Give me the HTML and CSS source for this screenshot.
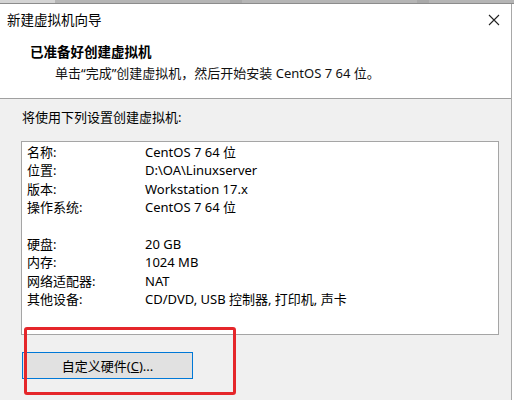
FILE: index.html
```html
<!DOCTYPE html>
<html lang="zh-CN">
<head>
<meta charset="utf-8">
<link rel="stylesheet" href="styles.css">
</head>
<body>
<div class="screen">
  <div class="topstrip">
    <span class="seg seg-a"></span>
    <span class="seg seg-b"></span>
    <span class="seg seg-c"></span>
    <span class="seg seg-d"></span>
  </div>
  <div class="window">
    <div class="titlebar">
      <span class="title">新建虚拟机向导</span>
      <svg class="close" width="12" height="12" viewBox="0 0 12 12"><path d="M1 1 L11 11 M11 1 L1 11" stroke="#222" stroke-width="1.1" fill="none"/></svg>
    </div>
    <div class="header">
      <div class="h-title">已准备好创建虚拟机</div>
      <div class="h-sub">单击“完成”创建虚拟机，然后开始安装 CentOS 7 64 位。</div>
    </div>
    <div class="content">
      <div class="intro">将使用下列设置创建虚拟机:</div>
      <div class="listbox">
        <div class="row"><span class="k">名称:</span><span class="v">CentOS 7 64 位</span></div>
        <div class="row"><span class="k">位置:</span><span class="v">D:\OA\Linuxserver</span></div>
        <div class="row"><span class="k">版本:</span><span class="v">Workstation 17.x</span></div>
        <div class="row"><span class="k">操作系统:</span><span class="v">CentOS 7 64 位</span></div>
        <div class="row blank"></div>
        <div class="row"><span class="k">硬盘:</span><span class="v">20 GB</span></div>
        <div class="row"><span class="k">内存:</span><span class="v">1024 MB</span></div>
        <div class="row"><span class="k">网络适配器:</span><span class="v">NAT</span></div>
        <div class="row"><span class="k">其他设备:</span><span class="v">CD/DVD, USB 控制器, 打印机, 声卡</span></div>
      </div>
      <div class="btnrow">
        <button class="btn">自定义硬件(<u>C</u>)...</button>
        <div class="highlight"></div>
      </div>
    </div>
  </div>
</div>
</body>
</html>
```

FILE: styles.css
```css
html, body {
  margin: 0;
  padding: 0;
  background: #ffffff;
}
.screen {
  width: 514px;
  height: 400px;
  overflow: hidden;
  font-family: "Noto Sans", "Noto Sans CJK SC", sans-serif;
  font-size: 13px;
  color: #000;
}
.topstrip {
  height: 4px;
  display: flex;
  background: #a9a9a9;
  border-bottom: 1px solid #8c8c8c;
  box-sizing: border-box;
}
.seg { height: 100%; }
.seg-a { width: 55px; background: #d4d4d4; }
.seg-b { width: 175px; background: #b5b5b5; margin-right: 12px; }
.seg-c { width: 175px; background: #b5b5b5; margin-right: 12px; }
.seg-d { flex: 1; background: #b5b5b5; }
.window {
  width: 511px;
  height: 396px;
  border-right: 1px solid #a8a8a8;
  display: flex;
  flex-direction: column;
}
.titlebar {
  height: 31px;
  display: flex;
  align-items: center;
  justify-content: space-between;
  padding: 0 11px 0 7px;
  background: #fff;
}
.title {
  font-size: 13.5px;
  line-height: 20px;
}
.close { display: block; }
.header {
  height: 64px;
  box-sizing: border-box;
  padding: 7px 0 0 30px;
  background: #fff;
  border-bottom: 1px solid #a0a0a0;
}
.h-title {
  font-weight: bold;
  line-height: 20px;
  font-size: 13.5px;
}
.h-sub {
  margin-top: 1px;
  padding-left: 25px;
  line-height: 20px;
  color: #111;
}
.content {
  flex: 1;
  background: #f0f0f0;
  padding: 8px 0 0 21px;
}
.intro {
  line-height: 20px;
  padding-left: 1px;
}
.listbox {
  margin-top: 14px;
  width: 478px;
  height: 194px;
  box-sizing: border-box;
  background: #fff;
  border: 1px solid #a5a5a5;
  padding: 1px 0 0 5px;
}
.row {
  display: flex;
  height: 18.4px;
  line-height: 18.4px;
}
.k { width: 118px; }
.btnrow {
  position: relative;
  margin-top: 17px;
  padding-left: 1px;
}
.btn {
  width: 171px;
  height: 27px;
  background: #e1e1e1;
  border: 1px solid #0078d7;
  font-family: inherit;
  font-size: 13px;
  color: #000;
  padding: 0;
  margin: 0;
  display: block;
}
.highlight {
  position: absolute;
  left: 3px;
  top: -25px;
  width: 212px;
  height: 68px;
  box-sizing: border-box;
  border: 3px solid #e5262a;
  border-radius: 3px;
}
```
